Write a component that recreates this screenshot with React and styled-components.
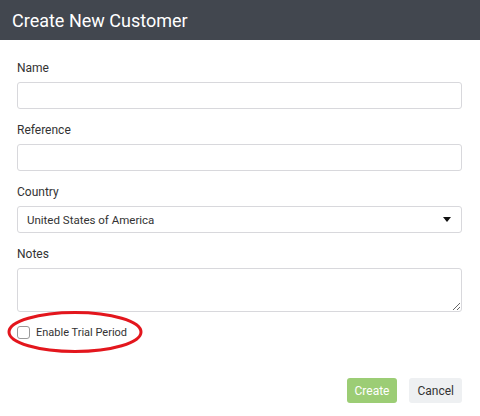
import React from "react";
import styled, { createGlobalStyle } from "styled-components";

const GlobalStyle = createGlobalStyle`
  html, body {
    margin: 0;
    padding: 0;
    background: #ffffff;
    font-family: Roboto, "Liberation Sans", Arial, sans-serif;
  }
`;

const Dialog = styled.div`
  width: 480px;
  height: 416px;
  background: #ffffff;
  display: flex;
  flex-direction: column;
`;

const Header = styled.div`
  height: 40px;
  background-color: #42474f;
  display: flex;
  align-items: center;
  padding-left: 12px;
`;

const Title = styled.h1`
  margin: 0;
  font-size: 18px;
  font-weight: 400;
  color: #ffffff;
`;

const Body = styled.form`
  padding: 20px 18px 0 17px;
  display: flex;
  flex-direction: column;
`;

const Field = styled.div`
  display: flex;
  flex-direction: column;
  margin-bottom: 13px;
`;

const Label = styled.label`
  font-size: 12px;
  line-height: 16px;
  color: #333333;
  margin-bottom: 6px;
`;

const TextInput = styled.input`
  box-sizing: border-box;
  height: 27px;
  border: 1px solid #d8d8dc;
  border-radius: 3px;
  padding: 0 9px;
  font-family: inherit;
  font-size: 12px;
  outline: none;
`;

const SelectBox = styled.div`
  box-sizing: border-box;
  height: 27px;
  border: 1px solid #d8d8dc;
  border-radius: 3px;
  padding: 0 9px;
  display: flex;
  align-items: center;
  justify-content: space-between;
  font-size: 11.5px;
  color: #333333;
`;

const Caret = styled.span`
  width: 0;
  height: 0;
  border-left: 4px solid transparent;
  border-right: 4px solid transparent;
  border-top: 5px solid #111111;
  margin-right: 1px;
`;

const TextArea = styled.textarea`
  box-sizing: border-box;
  height: 44px;
  border: 1px solid #d8d8dc;
  border-radius: 3px;
  padding: 6px 9px;
  font-family: inherit;
  font-size: 12px;
  resize: vertical;
  outline: none;
  display: block;
`;

const CheckRow = styled.div`
  position: relative;
  display: flex;
  align-items: center;
  gap: 6px;
  height: 14px;
`;

const CheckBox = styled.span`
  box-sizing: border-box;
  width: 13px;
  height: 13px;
  border: 1px solid #9a9a9a;
  border-radius: 3px;
  background: #ffffff;
`;

const CheckText = styled.span`
  font-size: 11px;
  color: #333333;
`;

/* red ring drawn over the trial checkbox */
const Mark = styled.svg`
  position: absolute;
  left: -10px;
  top: -15px;
  pointer-events: none;
`;

const Footer = styled.div`
  display: flex;
  justify-content: flex-end;
  gap: 12px;
  padding-right: 18px;
  margin-top: 39px;
`;

const Button = styled.button`
  height: 25px;
  padding: 0 8px;
  border: none;
  border-radius: 3px;
  font-family: inherit;
  font-size: 12px;
  color: ${({ $primary }) => ($primary ? "#ffffff" : "#333333")};
  background-color: ${({ $primary }) => ($primary ? "#9ccd75" : "#eef0f2")};
`;

const App = () => (
  <>
    <GlobalStyle />
    <Dialog>
      <Header>
        <Title>Create New Customer</Title>
      </Header>
      <Body>
        <Field>
          <Label>Name</Label>
          <TextInput />
        </Field>
        <Field>
          <Label>Reference</Label>
          <TextInput />
        </Field>
        <Field>
          <Label>Country</Label>
          <SelectBox>
            United States of America
            <Caret />
          </SelectBox>
        </Field>
        <Field>
          <Label>Notes</Label>
          <TextArea />
        </Field>
        <CheckRow>
          <CheckBox />
          <CheckText>Enable Trial Period</CheckText>
          <Mark width="140" height="44" viewBox="0 0 140 44">
            <ellipse
              cx="68"
              cy="22"
              rx="66"
              ry="19.5"
              fill="none"
              stroke="#e3161d"
              strokeWidth="3"
            />
          </Mark>
        </CheckRow>
      </Body>
      <Footer>
        <Button type="button" $primary>
          Create
        </Button>
        <Button type="button">Cancel</Button>
      </Footer>
    </Dialog>
  </>
);

export default App;
